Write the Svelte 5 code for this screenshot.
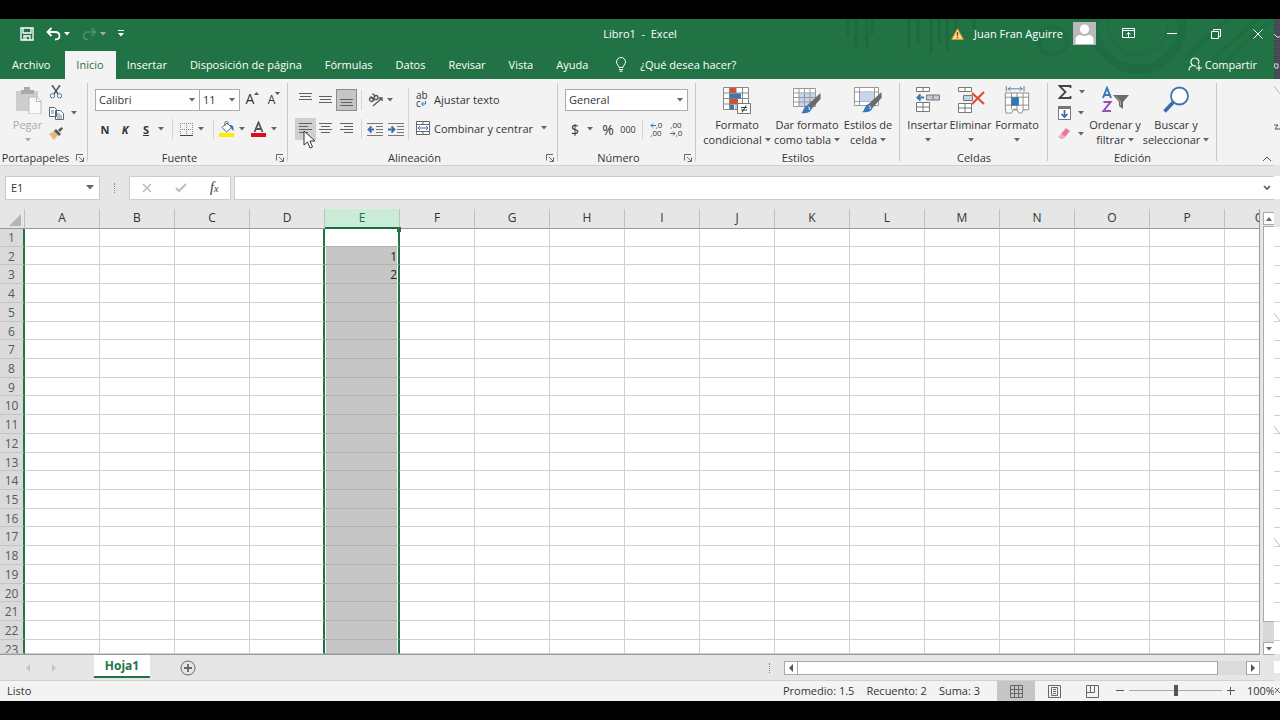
<script>
  const tabs = ['Archivo', 'Inicio', 'Insertar', 'Disposición de página', 'Fórmulas', 'Datos', 'Revisar', 'Vista', 'Ayuda'];
  const columns = 'ABCDEFGHIJKLMNOPQ'.split('');
  const rows = Array.from({ length: 23 }, (_, i) => i + 1);
  const cells = { E2: '1', E3: '2' };
  let zoom = $state(50);
</script>

{#snippet arrow()}
  <svg class="arrow" width="6" height="4" viewBox="0 0 6 4" aria-hidden="true"><path d="M0 0h6L3 3.5z" fill="currentColor" /></svg>
{/snippet}

{#snippet lines(list)}
  <svg width="14" height="14" viewBox="0 0 14 14" stroke="#606060" aria-hidden="true">
    {#each list as [x1, x2, y]}<path d="M{x1} {y}.5H{x2}" />{/each}
  </svg>
{/snippet}

{#snippet launcher(name)}
  <button class="launcher" aria-label={name}>
    <svg width="8" height="8" viewBox="0 0 8 8" fill="none" stroke="#666"><path d="M.5 6.500V.5H7M3 3l4 4M7.500 3.500v4h-4" /></svg>
  </button>
{/snippet}

<div class="screen">
  <div class="app">
    <header>
      <svg class="deco" width="440" height="60" viewBox="0 0 440 60" aria-hidden="true" fill="none" stroke="#1c633b">
        <path d="M14 0v18M22 0v28M33 0v30M38 0v16M75 0v30M84 0v24M97 0v34M105 0v24M113 0v32M122 0v20M140 0v10" stroke-width="3" opacity=".55" />
        <circle cx="304" cy="6" r="44" stroke-width="9" opacity=".4" />
        <circle cx="304" cy="6" r="30" stroke-width="2" opacity=".3" />
        <circle cx="219" cy="22" r="14" stroke-width="4" opacity=".4" />
        <path d="M370 48L424 0M350 40L394 0M390 44L434 4" stroke-width="4" opacity=".35" />
      </svg>
      <div class="titlebar">
        <div class="quick">
          <button aria-label="Guardar"><svg width="14" height="14" viewBox="0 0 14 14" fill="none" stroke="#fff" stroke-width="1.300"><path d="M1 1h12v12H1zM3 1v5h8V1M4 13V9h6v4M6 10v3" /></svg></button>
          <button aria-label="Deshacer"><svg width="15" height="14" viewBox="0 0 15 14" fill="none" stroke="#fff" stroke-width="1.800"><path d="M5.500 1L1.500 5l4 4M2 5h7c3 0 4.500 2 4.500 4S12 12.500 9 12.500" /></svg>{@render arrow()}</button>
          <button class="off" aria-label="Rehacer"><svg width="15" height="14" viewBox="0 0 15 14" fill="none" stroke="currentColor" stroke-width="1.600"><path d="M9.500 1l4 4-4 4M13 5H6C3 5 1.500 7 1.500 9S3 12.500 6 12.500" /></svg>{@render arrow()}</button>
          <button aria-label="Personalizar"><svg width="6" height="7" viewBox="0 0 6 7"><path d="M0 0h6v1H0zM0 3h6L3 6.500z" fill="#fff" /></svg></button>
        </div>
        <h1>Libro1&nbsp; -&nbsp; Excel</h1>
        <div class="account">
          <svg width="13" height="12" viewBox="0 0 13 12" aria-hidden="true"><path d="M6.500 .8L12.300 11.400H.7z" fill="#fbd98a" stroke="#e8912d" /><path d="M6.500 4v4M6.500 9v1.300" stroke="#6b4a18" stroke-width="1.300" /></svg>
          <span>Juan Fran Aguirre</span>
          <svg class="avatar" width="23" height="23" viewBox="0 0 23 23" aria-hidden="true"><path d="M0 0h23v23H0z" fill="#b9b9b9" /><path d="M11.500 2.500c3 0 4.500 2 4.500 4.500s-1.500 5-4.500 5S7 9.500 7 7s1.500-4.500 4.500-4.500zM2.500 22v-4c0-3 2-5 5-5 2.500 1.500 5.500 1.500 8 0 3 0 5 2 5 5v4z" fill="#fff" /></svg>
          <div class="window">
            <button aria-label="Opciones de la cinta"><svg width="13" height="11" viewBox="0 0 13 11" fill="none" stroke="#fff"><path d="M.5 .5h12v9H.5zM.5 2.500h12M6.500 9V4.500M4.500 6.500l2-2 2 2" /></svg></button>
            <button aria-label="Minimizar"><svg width="10" height="2" viewBox="0 0 10 2"><path d="M0 0h10v1H0z" fill="#fff" /></svg></button>
            <button aria-label="Restaurar"><svg width="10" height="10" viewBox="0 0 10 10" fill="none" stroke="#fff"><path d="M.5 2.500h7v7h-7zM2.500 2V.5h7v7H8" /></svg></button>
            <button class="close" aria-label="Cerrar"><svg width="10" height="10" viewBox="0 0 10 10" stroke="#fff"><path d="M.5 .5l9 9M9.500 .5l-9 9" /></svg></button>
          </div>
        </div>
      </div>
      <nav>
        {#each tabs as tab}
          <button class:active={tab === 'Inicio'}>{tab}</button>
        {/each}
        <button class="tell"><svg width="12" height="15" viewBox="0 0 12 15" fill="none" stroke="#fff"><path d="M4 10.500C4 8.500 1.500 7.500 1.500 5a4.500 4.500 0 0 1 9 0c0 2.500-2.500 3.500-2.500 5.500zM4 12.500h4M4.500 14.200h3" /></svg>¿Qué desea hacer?</button>
        <button class="share"><svg width="14" height="14" viewBox="0 0 14 14" fill="none" stroke="#fff" stroke-width="1.100"><path d="M1 13.500c0-3 1.500-4.500 4-5a4 4 0 1 1 5-1M6 8.500l2 1M11 8v6M8 11h6" /></svg>Compartir</button>
      </nav>
    </header>

    <div class="ribbon">
      <section class="clipboard">
        <div class="body">
          <button class="big off"><svg width="28" height="28" viewBox="0 0 28 28"><path d="M2 5h22v20H2z" fill="#cfcccd" /><path d="M7 4h3V1h6v3h4v4H7z" fill="#aaa" /><path d="M15 11h8l4 4v13H15z" fill="#fafafa" stroke="#bbb" /><path d="M22.500 11v4.500H27" fill="none" stroke="#bbb" /></svg><span>Pegar</span><span>{@render arrow()}</span></button>
          <div class="stack">
            <button aria-label="Cortar"><svg width="14" height="14" viewBox="0 0 14 14" fill="none" stroke="#555" stroke-width="1.500"><path d="M3 0l6 9M11 0L5 9" /><circle cx="3.500" cy="10.800" r="2.200" stroke="#4e7895" stroke-width="1" /><circle cx="10.500" cy="10.800" r="2.200" stroke="#4e7895" stroke-width="1" /></svg></button>
            <button aria-label="Copiar"><svg width="15" height="13" viewBox="0 0 15 13" fill="#fff" stroke="#666"><path d="M.5 .5h5l2 2v7h-7zM6.500 3.500h5l3 3v6h-8z" /><path d="M2 4h3M2 6h3M8 7h3M8 9h5M8 11h5" stroke="#5b83a5" /></svg>{@render arrow()}</button>
            <button aria-label="Copiar formato"><svg width="14" height="13" viewBox="0 0 14 13"><path d="M0 7l5-3 4 4-4 5z" fill="#e9b980" /><path d="M5 4l2-2 5 5-2 2zM9 3l3.500-3L14 1.500 11 5z" fill="#555" /></svg></button>
          </div>
        </div>
        <footer>Portapapeles{@render launcher('Opciones del portapapeles')}</footer>
      </section>

      <section class="font">
        <div class="body rows2">
          <div class="row font1">
            <span class="drop"><select aria-label="Fuente"><option>Calibri</option></select>{@render arrow()}</span>
            <span class="drop"><select aria-label="Tamaño"><option>11</option></select>{@render arrow()}</span>
            <button class="grow" aria-label="Aumentar tamaño">A<svg width="5" height="3" viewBox="0 0 5 3"><path d="M0 3h5L2.500 0z" fill="#555" /></svg></button>
            <button class="shrink" aria-label="Disminuir tamaño">A<svg width="5" height="3" viewBox="0 0 5 3"><path d="M0 0h5L2.500 3z" fill="#555" /></svg></button>
          </div>
          <div class="row font2">
            <button><b>N</b></button><button><b><i>K</i></b></button><button><b><u>S</u></b></button><button aria-label="Subrayado">{@render arrow()}</button>
            <i class="sep"></i>
            <button aria-label="Bordes"><svg width="13" height="13" viewBox="0 0 13 13" stroke="#888"><path d="M.5 0v12M6.500 0v12M12.500 0v12M0 .5h13M0 6.500h13" stroke-dasharray="1 1" /><path d="M0 12.500h13" stroke="#444" /></svg></button>
            <button aria-label="Más bordes">{@render arrow()}</button>
            <i class="sep"></i>
            <button aria-label="Color de relleno"><svg width="16" height="16" viewBox="0 0 16 16"><path d="M0 12h15v4H0z" fill="#ffed00" /><path d="M3 6.500L8 2l4.500 4.500L7.500 11z" fill="#fff" stroke="#666" /><path d="M6 5V1.500a1.500 1.500 0 0 1 3 0V4" fill="none" stroke="#666" /><path d="M11 4c3 0 4 2 3.500 6-2-1-1.500-3-3.500-4z" fill="#3875ad" /></svg></button>
            <button aria-label="Más rellenos">{@render arrow()}</button>
            <button aria-label="Color de fuente"><svg width="15" height="16" viewBox="0 0 15 16"><path d="M0 12h15v4H0z" fill="#e00b1c" /><path d="M3.500 11L7.500 1.500 11.500 11M5 8h5" fill="none" stroke="#555" stroke-width="1.800" /></svg></button>
            <button aria-label="Más colores">{@render arrow()}</button>
          </div>
        </div>
        <footer>Fuente{@render launcher('Opciones de fuente')}</footer>
      </section>

      <section class="align">
        <div class="body">
          <div class="rows2">
            <div class="row align1">
              <button aria-label="Alinear arriba">{@render lines([[0, 13, 0], [1, 12, 3], [0, 13, 6]])}</button>
              <button aria-label="Alinear en medio">{@render lines([[0, 13, 3], [1, 12, 6], [0, 13, 9]])}</button>
              <button class="pressed" aria-label="Alinear abajo">{@render lines([[0, 13, 6], [1, 12, 9], [0, 13, 12]])}</button>
              <i class="sep"></i>
              <button class="left" aria-label="Orientación"><svg width="15" height="14" viewBox="0 0 15 14" fill="none" stroke="#555" stroke-width="1.300"><circle cx="3.500" cy="6.500" r="2" /><path d="M2.500 3.500l4 4" /><circle cx="8" cy="4.500" r="2" /><path d="M4.500 .5l3 3M5 13L14 5M14 8V5h-3" /></svg>{@render arrow()}</button>
            </div>
            <div class="row align2">
              <button class="hover" aria-label="Alinear a la izquierda">{@render lines([[0, 13, 1], [0, 9, 4], [0, 13, 7], [0, 9, 10]])}
                <svg class="cursor" width="14" height="20" viewBox="0 0 14 20"><path d="M1 1v14l3.500-3 2.500 6 2.500-1-2.500-6H12z" fill="#fff" stroke="#333" /></svg></button>
              <button aria-label="Centrar">{@render lines([[0, 13, 1], [2, 11, 4], [0, 13, 7], [2, 11, 10]])}</button>
              <button aria-label="Alinear a la derecha">{@render lines([[0, 13, 1], [4, 13, 4], [0, 13, 7], [4, 13, 10]])}</button>
              <i class="sep"></i>
              <button aria-label="Disminuir sangría"><svg width="16" height="13" viewBox="0 0 16 13"><path d="M0 .5h16M9 3.500h7M9 6.500h7M9 9.500h7M0 12.500h16" stroke="#777" /><path d="M7 6.500H2M4.500 3.500l-3 3 3 3" fill="none" stroke="#3c6fa8" stroke-width="1.800" /></svg></button>
              <button aria-label="Aumentar sangría"><svg width="16" height="13" viewBox="0 0 16 13"><path d="M0 .5h16M9 3.500h7M9 6.500h7M9 9.500h7M0 12.500h16" stroke="#777" /><path d="M0 6.500h6M3.500 3.500l3 3-3 3" fill="none" stroke="#3c6fa8" stroke-width="1.800" /></svg></button>
            </div>
          </div>
          <i class="sep tall"></i>
          <div class="rows2 wide">
            <button class="wrap"><span class="ab"><span>ab</span><span>c<svg width="5" height="5" viewBox="0 0 5 5" fill="none" stroke="#3c6fa8"><path d="M4.500 0v3H1M2.500 1L.5 3l2 2" /></svg></span></span>Ajustar texto</button>
            <button class="wrap"><svg width="14" height="14" viewBox="0 0 14 14" fill="#fff" stroke="#666"><path d="M.5 .5h13v13H.5zM.5 3.500h13M.5 10.500h13M7 .5v3M7 10.500v3" /><path d="M2 7h10M4 5L2 7l2 2M10 5l2 2-2 2" fill="none" stroke="#3c6fa8" /></svg>Combinar y centrar<span class="push">{@render arrow()}</span></button>
          </div>
        </div>
        <footer>Alineación{@render launcher('Opciones de alineación')}</footer>
      </section>

      <section class="number">
        <div class="body rows2">
          <div class="row"><span class="drop general"><select aria-label="Formato de número"><option>General</option></select>{@render arrow()}</span></div>
          <div class="row number2">
            <button class="symbol">$</button><button aria-label="Más monedas">{@render arrow()}</button><button class="symbol">%</button><button class="zeros">000</button>
            <i class="sep"></i>
            <button class="dec"><span><svg width="6" height="5" viewBox="0 0 6 5" fill="none" stroke="#3c6fa8"><path d="M6 2.500H1M3 .5l-2 2 2 2" /></svg>,0</span><span>,00</span></button>
            <button class="dec"><span>,00</span><span><svg width="6" height="5" viewBox="0 0 6 5" fill="none" stroke="#3c6fa8"><path d="M0 2.500h5M3 .5l2 2-2 2" /></svg>,0</span></button>
          </div>
        </div>
        <footer>Número{@render launcher('Opciones de número')}</footer>
      </section>

      <section class="styles">
        <div class="body">
          <button class="big"><svg width="28" height="28" viewBox="0 0 28 28"><path d="M.5 1.500h25v22H.5zM6.500 1.500v22M13 1.500v22M19.500 1.500v22M.5 7h25M.5 12.500h25M.5 18h25" fill="#fff" stroke="#888" /><path d="M7 2h6v5H7zM7 13h8v5H7z" fill="#d8512f" /><path d="M7 7.500h11v5H7zM7 18.500h4v5H7z" fill="#3c76b5" /><path d="M14.500 17.500h13v10h-13z" fill="#fff" stroke="#777" /><path d="M18 21.500h6M18 24h6M23 19.500l-4 7" stroke="#333" /></svg><span>Formato</span><span>condicional {@render arrow()}</span></button>
          <button class="big"><svg width="28" height="28" viewBox="0 0 28 28"><path d="M.5 2.500h22v18H.5z" fill="#fff" /><path d="M6 7.500h16v13H6z" fill="#c4d5ee" /><path d="M.5 2.500h22v18H.5zM6 2.500v18M11.500 2.500v18M17 2.500v18M.5 7h22M.5 11.500h22M.5 16h22" fill="none" stroke="#999" /><path d="M27.500 7v6l-9 10-4-4z" fill="#6b6b6b" /><path d="M15 19c3 0 4 3 3 5s-4 4-10 3c3-1 2-7 7-8z" fill="#3c76b5" /><path d="M15 21c1 0 2 1 1 3" stroke="#fff" fill="none" /></svg><span>Dar formato</span><span>como tabla {@render arrow()}</span></button>
          <button class="big"><svg width="28" height="28" viewBox="0 0 28 28"><path d="M.5 1.500h24v18H.5zM5.500 1.500v18M20.500 1.500v18M.5 6h24M.5 15.500h24" fill="#fff" stroke="#999" /><path d="M6 6.500h14v9H6z" fill="#c4d5ee" /><path d="M27.500 6v6l-9 10-4-4z" fill="#6b6b6b" /><path d="M15 18c3 0 4 3 3 5s-4 4-10 3c3-1 2-7 7-8z" fill="#3c76b5" /><path d="M15 20c1 0 2 1 1 3" stroke="#fff" fill="none" /></svg><span>Estilos de</span><span>celda {@render arrow()}</span></button>
        </div>
        <footer>Estilos</footer>
      </section>

      <section class="cellgroup">
        <div class="body">
          <button class="big"><svg width="26" height="28" viewBox="0 0 26 28"><path d="M1.500 1.500h13v4h-13zM8 1.500v4M1.500 16.500h13v9h-13zM8 16.500v9M1.500 21h13" fill="#fff" stroke="#777" /><path d="M11.500 9h13v5h-13zM18 9v5" fill="#c3cdd7" stroke="#777" /><path d="M9 11.500H3M5.500 8.500l-3 3 3 3" fill="none" stroke="#3c76b5" stroke-width="2" /></svg><span>Insertar</span><span>{@render arrow()}</span></button>
          <button class="big"><svg width="28" height="28" viewBox="0 0 28 28"><path d="M1.500 1.500h13v4h-13zM8 1.500v4M1.500 17.500h13v9h-13zM8 17.500v9M1.500 22h13" fill="#fff" stroke="#777" /><path d="M6.500 9.500h9v5h-9z" fill="#c3d3e6" stroke="#777" /><path d="M15 7l12 11M27 6L15 18" stroke="#dc4f38" stroke-width="2.200" /></svg><span>Eliminar</span><span>{@render arrow()}</span></button>
          <button class="big"><svg width="28" height="28" viewBox="0 0 28 30"><path d="M1.500 7.500h25v18h-25zM8 7.500v18M14 7.500v18M20.500 7.500v18M1.500 12h25M1.500 20.500h25" fill="#fff" stroke="#888" /><path d="M8 12h8v9H8z" fill="#3272b5" /><path d="M2.500 0v6M21.500 0v6M4 3h16M7 1L4.500 3 7 5M17 1l2.500 2L17 5" fill="none" stroke="#4b7faf" /><path d="M2 25v4h6l2-4h4l2 4h3l2-4" fill="#fff" stroke="#888" /></svg><span>Formato</span><span>{@render arrow()}</span></button>
        </div>
        <footer>Celdas</footer>
      </section>

      <section class="edit">
        <div class="body">
          <div class="stack">
            <button aria-label="Autosuma"><svg width="14" height="14" viewBox="0 0 14 14" fill="none" stroke="#444" stroke-width="1.800"><path d="M12.500 3V1H1.500l6 6-6 6h11v-2" /></svg>{@render arrow()}</button>
            <button aria-label="Rellenar"><svg width="13" height="14" viewBox="0 0 13 14"><path d="M.5 .5h12v13H.5z" fill="#fff" stroke="#777" /><path d="M0 0h13v3H0z" fill="#777" /><path d="M6.500 4v7M3.500 8l3 3 3-3" fill="none" stroke="#2e6cac" stroke-width="1.700" /></svg>{@render arrow()}</button>
            <button aria-label="Borrar"><svg width="13" height="12" viewBox="0 0 13 12"><path d="M8 0l4 3-5 6-4-3z" fill="#e8799b" /><path d="M3 6l4 3-2 2H3L0 9z" fill="#f0a9bf" /></svg>{@render arrow()}</button>
          </div>
          <button class="big"><svg width="28" height="28" viewBox="0 0 28 28"><path d="M2 12L6 2l4 10M3.500 9h5" fill="none" stroke="#3c76b5" stroke-width="2" /><path d="M2.500 16h7l-7 9h7.500" fill="none" stroke="#9450b5" stroke-width="2" /><path d="M12 9h16l-6 7v7l-4-3v-4z" fill="#6b6b6b" /><path d="M15 10.500l4.500 5v4" stroke="#aaa" fill="none" /></svg><span>Ordenar y</span><span>filtrar {@render arrow()}</span></button>
          <button class="big"><svg width="28" height="28" viewBox="0 0 28 28"><circle cx="17.500" cy="10" r="8.500" fill="#fff" stroke="#3c76b5" stroke-width="1.800" /><path d="M11 16.500L2.500 25.500" stroke="#3b6ca6" stroke-width="3.600" /></svg><span>Buscar y</span><span>seleccionar {@render arrow()}</span></button>
        </div>
        <footer>Edición</footer>
      </section>
      <button class="collapse" aria-label="Contraer la cinta"><svg width="10" height="6" viewBox="0 0 10 6" fill="none" stroke="#555"><path d="M1 5l4-4 4 4" /></svg></button>
    </div>

    <div class="formula">
      <div class="namebox"><input aria-label="Cuadro de nombres" value="E1" /><svg width="8" height="5" viewBox="0 0 8 5"><path d="M0 0h8L4 4.500z" fill="#666" /></svg></div>
      <i class="dots"></i>
      <div class="fxbox">
        <button aria-label="Cancelar"><svg width="10" height="10" viewBox="0 0 10 10" stroke="#bbb" stroke-width="1.500"><path d="M1 1l8 8M9 1L1 9" /></svg></button>
        <button aria-label="Introducir"><svg width="12" height="10" viewBox="0 0 12 10" fill="none" stroke="#bbb" stroke-width="2"><path d="M1 5l3 3 7-7" /></svg></button>
        <button class="fx" aria-label="Insertar función"><i>f<small>x</small></i></button>
      </div>
      <div class="entry"><input aria-label="Barra de fórmulas" /><svg width="8" height="6" viewBox="0 0 8 6" fill="none" stroke="#555" stroke-width="1.600"><path d="M1 1l3 3 3-3" /></svg></div>
    </div>

    <main>
      <table>
        <thead>
          <tr>
            <th class="corner"><svg width="12" height="12" viewBox="0 0 12 12"><path d="M12 0v12H0z" fill="#b5b5b5" /></svg></th>
            {#each columns as col}
              <th class:selected={col === 'E'} class:last={col === 'Q'} scope="col"><span>{col}</span>{#if col === 'E'}<i class="handle"></i>{/if}</th>
            {/each}
          </tr>
        </thead>
        <tbody>
          {#each rows as row}
            <tr>
              <th scope="row">{row}</th>
              {#each columns as col}
                <td class:before={col === 'D'} class:sel={col === 'E'} class:first={row === 1}>{cells[col + row] ?? ''}</td>
              {/each}
            </tr>
          {/each}
        </tbody>
      </table>
      <div class="vscroll">
        <button aria-label="Subir"><svg width="6" height="4" viewBox="0 0 6 4"><path d="M0 4h6L3 0z" fill="#666" /></svg></button>
        <i class="thumb"></i><i class="track"></i>
        <button aria-label="Bajar">{@render arrow()}</button>
      </div>
    </main>

    <div class="sheets">
      <button class="step" aria-label="Hoja anterior"><svg width="4" height="8" viewBox="0 0 4 8"><path d="M4 0v8L0 4z" fill="#c4c4c4" /></svg></button>
      <button class="step" aria-label="Hoja siguiente"><svg width="4" height="8" viewBox="0 0 4 8"><path d="M0 0v8l4-4z" fill="#c4c4c4" /></svg></button>
      <button class="sheet">Hoja1</button>
      <button class="add" aria-label="Hoja nueva"><svg width="16" height="16" viewBox="0 0 16 16" fill="none" stroke="#666"><circle cx="8" cy="8" r="7" /><path d="M8 4v8M4 8h8" stroke-width="1.800" /></svg></button>
      <i class="dots"></i>
      <div class="hscroll">
        <button aria-label="Izquierda"><svg width="4" height="8" viewBox="0 0 4 8"><path d="M4 0v8L0 4z" fill="#555" /></svg></button>
        <i class="thumb"></i><i class="track"></i>
        <button aria-label="Derecha"><svg width="4" height="8" viewBox="0 0 4 8"><path d="M0 0v8l4-4z" fill="#555" /></svg></button>
      </div>
    </div>

    <div class="status">
      <span class="ready">Listo</span>
      <span>Promedio: 1.5</span><span>Recuento: 2</span><span>Suma: 3</span>
      <div class="views">
        <button class="on" aria-label="Normal"><svg width="13" height="13" viewBox="0 0 13 13" fill="none" stroke="#666"><path d="M.5 .5h12v12H.5zM4.500 .5v12M8.500 .5v12M.5 4.500h12M.5 8.500h12" /></svg></button>
        <button aria-label="Diseño de página"><svg width="13" height="13" viewBox="0 0 13 13" fill="none" stroke="#666"><path d="M.5 .5h12v12H.5zM3.500 2.500h6v8h-6zM5 4.500h3M5 6.500h3M5 8.500h3" /></svg></button>
        <button aria-label="Vista previa de salto"><svg width="13" height="13" viewBox="0 0 13 13" fill="none" stroke="#666"><path d="M.5 .5h12v12H.5zM.5 7.500h8v-7M4.500 .5v7" /></svg></button>
      </div>
      <div class="zoom">
        <button aria-label="Alejar"><svg width="8" height="8" viewBox="0 0 8 8" stroke="#555"><path d="M0 3.500h8" /></svg></button>
        <input type="range" min="0" max="100" bind:value={zoom} aria-label="Zoom" />
        <button aria-label="Acercar"><svg width="8" height="8" viewBox="0 0 8 8" stroke="#555"><path d="M0 3.500h8M3.500 0v8" /></svg></button>
      </div>
      <span class="percent">100%</span>
    </div>
  </div>

  <svg class="edge" viewBox="0 0 6 682" preserveAspectRatio="none" aria-hidden="true">
    <path d="M0 0h6v682H0z" fill="#e6e6e6" />
    <path d="M0 0h6v60H0z" fill="#414752" />
    {#each Array.from({ length: 15 }, (_, i) => i * 4) as y}
      <path d="M0 {y}.5h6" stroke="#68465f" /><path d="M0 {y + 2}.5h6" stroke="#335b53" />
    {/each}
    <path d="M0 15l3 3h3M0 45h4v4H1z" fill="none" stroke="#ddd" />
    <path d="M0 60h6v86H0z" fill="#f3f3f3" />
    <path d="M0 67l6 8" stroke="#bbb" />
    <path d="M0 106h4l-3 4h5" stroke="#555" fill="none" />
    <path d="M0 157h6v23H0zM0 208h6v427H0zM0 642h6v12H0z" fill="#fff" />
    {#each rows.slice(0, 22) as row}<path d="M0 {208 + Math.round(row * 18.75)}.5h6" stroke="#d0d0d0" />{/each}
    <path d="M0 294l6 8M0 407l6 8M0 519l6 8" stroke="#bbb" />
    <path d="M0 662h6v20H0z" fill="#f3f3f3" />
    <path d="M1 669l5 5M1 674l4-5" stroke="#7b5a45" />
  </svg>
</div>

<style>
  :global(body) { margin: 0; background: #000; }
  * { box-sizing: border-box; }
  .screen { height: 100vh; padding: 19px 0; display: flex; background: #000; font: 11px/15px "Open Sans", "Noto Sans", sans-serif; color: #333; }
  .app { flex: 1; min-width: 0; display: flex; flex-direction: column; background: #e6e6e6; }
  .edge { width: 6px; flex: none; height: 100%; }
  button { font: inherit; color: inherit; border: 0; background: none; padding: 0; margin: 0; display: flex; align-items: center; justify-content: center; white-space: nowrap; }
  input, select { font: inherit; color: inherit; border: 0; background: none; padding: 0; margin: 0; min-width: 0; }
  svg { display: block; flex: none; }

  header { position: relative; flex: none; background: #217346; color: #fff; overflow: hidden; }
  .deco { position: absolute; right: 0; top: 0; }
  .titlebar { position: relative; display: grid; grid-template-columns: 1fr auto 1fr; align-items: center; height: 32px; padding: 0 0 3px 6px; }
  h1 { font: inherit; margin: 0; }
  .quick { display: flex; align-items: center; padding-left: 14px; gap: 12px; }
  .quick button { gap: 3px; }
  .quick .off { color: #4b9169; }
  .account { display: flex; align-items: center; justify-content: flex-end; gap: 10px; }
  .window { display: flex; margin-right: -4px; }
  .window button { width: 44px; height: 29px; }
  .window .close { width: 40px; }
  nav { position: relative; display: flex; height: 28px; padding-left: 1px; }
  nav button { padding: 0 12px 2px 11px; }
  nav .active { background: #f3f3f3; color: #217346; margin-left: 3px; }
  nav .tell { gap: 13px; padding-left: 15px; }
  nav .share { margin-left: auto; gap: 3px; padding-right: 17px; }

  .ribbon { display: flex; flex: none; height: 87px; background: #f3f3f3; border-bottom: 1px solid #d0d0d0; }
  section { display: flex; flex-direction: column; flex: none; position: relative; padding-top: 7px; }
  section::after { content: ""; position: absolute; right: 0; top: 4px; bottom: 4px; border-right: 1px solid #c8c8c8; }
  .clipboard { width: 88px; }
  .font { width: 200px; }
  .align { width: 270px; }
  .number { width: 138px; }
  .styles { width: 204px; }
  .cellgroup { width: 148px; }
  .edit { width: 169px; }
  .body { flex: 1; display: flex; padding: 0 6px; }
  .clipboard .body { padding-left: 8px; gap: 2px; }
  .font .body, .number .body, .align .body { padding-left: 7px; }
  .rows2 { display: flex; flex-direction: column; gap: 1px; }
  .row { display: grid; height: 28px; align-items: center; justify-content: start; }
  .row > button { height: 22px; }
  footer { display: flex; justify-content: center; height: 15px; line-height: 15px; }
  footer:has(button) { padding-right: 17px; }
  .launcher { position: absolute; right: 4px; bottom: 3px; }
  .arrow { color: #666; }
  header .arrow { color: inherit; }
  .sep { height: 20px; width: 1px; background: #d4d4d4; justify-self: center; }
  .sep.tall { height: 52px; margin: 2px 7px 0 1px; }
  .drop { display: grid; align-items: center; height: 22px; background: #fff; border: 1px solid #ababab; }
  .drop select, .drop .arrow { grid-area: 1 / 1; }
  .drop select { appearance: none; width: 100%; padding: 0 0 1px 3px; }
  .drop .arrow { justify-self: end; margin-right: 4px; }
  .general { width: 123px; }
  .font1 { grid-template-columns: 105px 40px 25px 18px; }
  .font1 .drop + .drop { margin-left: -1px; }
  .font1 button { align-items: flex-start; }
  .grow { font-size: 14px; line-height: 20px; }
  .grow svg, .shrink svg { margin-top: 3px; }
  .shrink { font-size: 12px; line-height: 22px; }
  .font2 { grid-template-columns: 20px 20px 22px 8px 14px 14px 16px 8px 20px 10px 22px 10px; }
  .align1 { grid-template-columns: 21px 20px 21px 8px 40px; }
  .align2 { grid-template-columns: 21px 20px 21px 8px 20px 22px; }
  .left { justify-content: flex-start; gap: 4px; padding-left: 3px; }
  .pressed { background: #c5c5c5; border: 1px solid #8c8c8c; }
  .hover { background: #cfcfcf; position: relative; }
  .cursor { position: absolute; left: 8px; top: 12px; z-index: 2; }
  .wide { flex: 1; }
  .wrap { height: 28px; justify-content: flex-start; gap: 4px; padding-bottom: 2px; }
  .ab { display: flex; flex-direction: column; width: 14px; font-size: 10px; line-height: 8px; text-align: left; }
  .ab span { display: flex; align-items: center; }
  .push { margin-left: 4px; }
  .number2 { grid-template-columns: 20px 10px 26px 14px 14px 14px 26px; }
  .symbol { font-size: 14px; }
  .zeros { font-size: 9px; }
  .dec { flex-direction: column; font-size: 8px; line-height: 8px; align-items: center; }
  .dec span { display: flex; align-items: center; }
  .big { flex-direction: column; justify-content: flex-start; height: 61px; }
  .big > svg { height: 28px; margin-bottom: 3px; }
  .big span { display: flex; align-items: center; justify-content: center; gap: 3px; height: 15px; }
  .clipboard .big { width: 39px; }
  .off, .off .arrow { color: #aaa; }
  .stack { display: flex; flex-direction: column; height: 62px; margin-top: -4px; }
  .stack button { height: 21px; gap: 7px; justify-content: flex-start; }
  .styles .big { width: 70px; }
  .styles .big:last-child { width: 52px; }
  .cellgroup .big { width: 43px; }
  .cellgroup .big:last-child { width: 50px; }
  .edit .body { padding-left: 10px; }
  .edit .stack { width: 28px; }
  .edit .big { width: 58px; }
  .edit .big:last-child { width: 64px; }
  .collapse { margin: auto 2px 3px auto; }

  .formula { display: flex; flex: none; padding: 10px 0 9px 5px; height: 43px; }
  .namebox, .fxbox, .entry { display: flex; align-items: center; background: #fff; border: 1px solid #ccc; }
  .namebox { width: 95px; padding: 0 5px 1px; }
  .namebox input { flex: 1; }
  .dots { width: 1px; height: 10px; margin: auto 14px; border-left: 1px dotted #888; }
  .fxbox { width: 102px; justify-content: space-around; margin-right: 3px; }
  .fx { font: 14px "Liberation Serif", serif; color: #333; }
  .fx small { font-size: 10px; }
  .entry { flex: 1; border-right: 0; padding-right: 3px; }
  .entry input { flex: 1; }

  main { flex: 1 1 0; min-height: 0; display: flex; }
  table { flex: 1; min-height: 0; display: flex; flex-direction: column; border-right: 1px solid #999; border-bottom: 1px solid #999; }
  tr { display: grid; grid-template-columns: 25px repeat(16, minmax(0, 75fr)) minmax(0, 34fr); min-height: 0; }
  thead { flex: none; }
  thead tr { height: 19px; }
  tbody { flex: 1 1 0; min-height: 0; display: grid; grid-template-rows: repeat(22, minmax(0, 75fr)) minmax(0, 57fr); }
  tbody tr { grid-template-rows: minmax(0, 1fr); }
  th, td { padding: 0; font-weight: 400; font-size: 12px; line-height: 19px; overflow: hidden; }
  thead th { position: relative; border-right: 1px solid #c0c0c0; border-bottom: 1px solid #999; overflow: visible; color: #333; line-height: 18px; }
  thead th.last { text-align: right; border-right: 0; overflow: hidden; }
  thead .last span { margin-right: -5px; }
  thead th.selected { background: #caecd6; border-bottom: 2px solid #1e6c44; color: #217346; }
  .corner svg { margin: 5px 0 0 9px; }
  .handle { position: absolute; z-index: 2; right: -2px; bottom: -5px; width: 4px; height: 5px; background: #217346; }
  tbody th { background: #dadada; color: #4a6254; border-bottom: 1px solid #c4c4c4; border-right: 2px solid #217346; }
  td { background: #fff; border-right: 1px solid #d0d0d0; border-bottom: 1px solid #d0d0d0; text-align: right; color: #222; }
  td:last-child { border-right: 0; }
  td.before { border-right: 2px solid #217346; }
  td.sel { background: #c6c6c6; border-right: 2px solid #217346; border-bottom-color: #b2b2b2; padding-right: 1px; box-shadow: inset -1px 0 #fff, inset 1px 0 #fff; }
  td.sel.first { background: #fff; }
  .vscroll { display: flex; flex-direction: column; width: 11px; margin-left: 3px; padding-top: 3px; }
  .vscroll button { flex: none; height: 13px; background: #fff; border: 1px solid #aaa; border-right: 0; }
  .vscroll .thumb { flex: 1; background: #fff; border: 1px solid #aaa; border-right: 0; margin-top: 1px; }
  .vscroll .track { height: 20px; background: #d8d8d8; }

  .sheets { display: flex; flex: none; align-items: center; height: 25px; }
  .step { width: 26px; }
  .step:first-child { margin-left: 15px; }
  .sheet { align-self: flex-start; height: 23px; width: 56px; margin: 0 30px 0 27px; background: #fff; border-bottom: 2px solid #217346; color: #217346; font-weight: 700; font-size: 12px; }
  .sheets .dots { margin: 0 14px 0 auto; }
  .hscroll { display: flex; width: 476px; height: 14px; margin-right: 14px; }
  .hscroll button { width: 14px; background: #fff; border: 1px solid #aaa; }
  .hscroll .thumb { flex: 1; background: #fff; border: 1px solid #aaa; margin-left: -1px; }
  .hscroll .track { width: 28px; background: #dcdcdc; }

  .status { display: flex; flex: none; align-items: center; height: 21px; background: #f3f3f3; border-top: 1px solid #d0d0d0; gap: 12px; padding: 0 0 1px 7px; }
  .ready { margin-right: auto; }
  .views { display: flex; height: 20px; margin: 0 -7px -1px 5px; }
  .views button { width: 38px; }
  .views .on { background: #c6c6c6; }
  .zoom { display: flex; align-items: center; gap: 5px; }
  .percent { width: 27px; }
  input[type="range"] { appearance: none; width: 93px; height: 12px; background: linear-gradient(#aaa, #aaa) center / 100% 1px no-repeat; }
  input[type="range"]::-webkit-slider-thumb { appearance: none; width: 4px; height: 11px; background: #555; }
</style>
